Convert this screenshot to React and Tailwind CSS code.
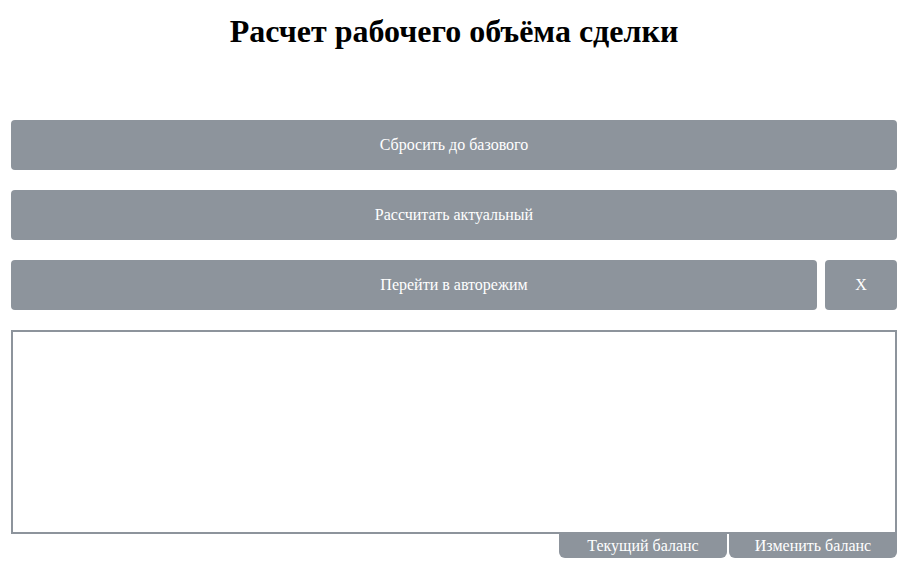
export default function App() {
  const btn =
    "h-[50px] rounded-[4px] bg-[#8d949c] text-white text-[16px] flex items-center justify-center";
  return (
    <div
      className="w-[915px] h-[574px] bg-white pl-[11px] pr-[18px] overflow-hidden"
      style={{ fontFamily: '"Liberation Serif", "Times New Roman", serif' }}
    >
      <h1 className="text-[32px] font-bold text-center text-black pt-[11px] leading-[40px] h-[120px]">
        Расчет рабочего объёма сделки
      </h1>
      <div className="flex flex-col gap-[20px]">
        <button className={btn}>Сбросить до базового</button>
        <button className={btn}>Рассчитать актуальный</button>
        <div className="flex gap-[8px]">
          <button className={btn + " flex-1 pl-[80px]"}>Перейти в авторежим</button>
          <button className={btn + " w-[72px]"}>X</button>
        </div>
        <div className="flex flex-col">
          <div className="h-[204px] border-2 border-[#8d949c] bg-white"></div>
          <div className="flex justify-end gap-[2px]">
            <button className="w-[168px] h-[24px] bg-[#8d949c] text-white text-[16px] rounded-b-[6px] flex items-center justify-center">
              Текущий баланс
            </button>
            <button className="w-[168px] h-[24px] bg-[#8d949c] text-white text-[16px] rounded-b-[6px] flex items-center justify-center">
              Изменить баланс
            </button>
          </div>
        </div>
      </div>
    </div>
  );
}
